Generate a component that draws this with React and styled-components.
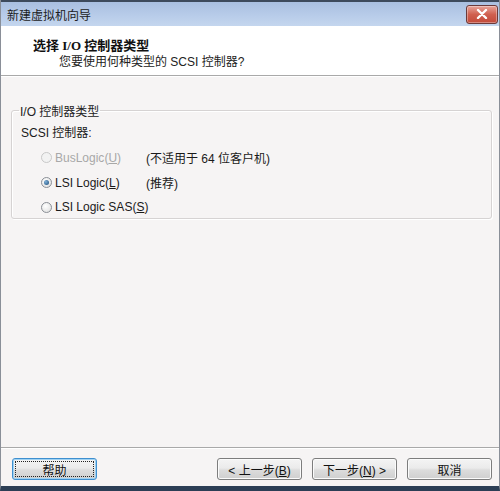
import React from "react";
import styled, { createGlobalStyle } from "styled-components";

const GlobalStyle = createGlobalStyle`
  html, body { margin: 0; padding: 0; background: #f6f4f4; }
  body {
    font-family: "Liberation Sans", "Noto Sans CJK SC", sans-serif;
    font-size: 12px;
    color: #1a1a1a;
  }
`;

const Window = styled.div`
  width: 500px;
  height: 491px;
  display: flex;
  flex-direction: column;
  box-sizing: border-box;
  border-left: 1px solid #8a8f98;
  border-right: 1px solid #8a8f98;
  border-bottom: 5px solid #2c3e55;
  background: #f6f4f4;
  overflow: hidden;
`;

const TitleBar = styled.div`
  height: 26px;
  flex: none;
  display: flex;
  align-items: center;
  justify-content: space-between;
  padding: 0 1px 0 6px;
  box-sizing: border-box;
  border-top: 2px solid #3d4a5c;
  background: linear-gradient(#a9bfe0, #b9cdea 60%, #c4d6ee);
`;

const Title = styled.span`
  font-size: 12px;
  color: #1c1c1c;
`;

const CloseButton = styled.div`
  width: 30px;
  height: 17px;
  border: 1px solid #6b3a3a;
  border-radius: 3px;
  background: linear-gradient(#e8a49a, #d0604f 50%, #c24a3a);
  display: flex;
  align-items: center;
  justify-content: center;
  box-shadow: inset 0 0 0 1px rgba(255, 255, 255, 0.35);
`;

const Header = styled.div`
  height: 50px;
  flex: none;
  background: #ffffff;
  border-bottom: 1px solid #a9a9a9;
  padding: 12px 0 0 32px;
  box-sizing: border-box;
`;

const HeaderTitle = styled.div`
  font-weight: bold;
  font-size: 13px;
  line-height: 16px;
  color: #111;
  font-family: "Liberation Serif", "Noto Sans CJK SC", serif;
`;

const HeaderSub = styled.div`
  padding-left: 26px;
  line-height: 16px;
  color: #222;
`;

const Body = styled.div`
  flex: 1;
  border-top: 1px solid #ffffff;
  padding: 25px 7px 0 10px;
`;

const GroupBox = styled.fieldset`
  margin: 0;
  padding: 6px 9px 0 9px;
  height: 117px;
  box-sizing: border-box;
  border: 1px solid #d6d3d3;
  border-radius: 3px;
  box-shadow: 1px 1px 0 #ffffff, inset 1px 1px 0 #ffffff;
`;

const Legend = styled.legend`
  padding: 0 1px;
  margin-left: -2px;
  color: #222;
`;

const GroupLabel = styled.div`
  line-height: 16px;
`;

const OptionList = styled.div`
  display: flex;
  flex-direction: column;
  gap: 9px;
  margin-top: 8px;
  padding-left: 20px;
`;

const OptionRow = styled.label`
  display: grid;
  grid-template-columns: 105px max-content;
  align-items: center;
  height: 16px;
  white-space: nowrap;
  color: ${(p) => (p.disabled ? "#a8a8a8" : "#1a1a1a")};
`;

const RadioWrap = styled.span`
  display: flex;
  align-items: center;
  gap: 3px;
`;

const Radio = styled.span`
  flex: none;
  width: 11px;
  height: 11px;
  border-radius: 50%;
  box-sizing: border-box;
  border: 1px solid ${(p) => (p.disabled ? "#c8c8c8" : "#8b8f96")};
  background: ${(p) =>
    p.disabled
      ? "#f2f2f2"
      : "radial-gradient(circle at 40% 35%, #ffffff, #dcdcdc)"};
  display: flex;
  align-items: center;
  justify-content: center;
  &::after {
    content: "";
    width: 5px;
    height: 5px;
    border-radius: 50%;
    background: radial-gradient(circle at 35% 35%, #7fb0d8, #1c4c7a);
    display: ${(p) => (p.checked ? "block" : "none")};
  }
`;

const Note = styled.span`
  color: #1a1a1a;
`;

const Spacer = styled.div`
  flex: 1;
`;

const Footer = styled.div`
  flex: none;
  height: 39px;
  box-sizing: border-box;
  border-top: 1px solid #a9a9a9;
  box-shadow: inset 0 1px 0 #ffffff;
  display: flex;
  align-items: center;
  padding: 4px 7px 0 11px;
  gap: 10px;
`;

const Button = styled.button`
  width: 85px;
  height: 22px;
  margin-left: ${(p) => (p.$push ? "auto" : "0")};
  font-family: "Liberation Sans", "Noto Sans CJK SC", sans-serif;
  font-size: 12px;
  color: #111;
  border-radius: 3px;
  border: 1px solid ${(p) => (p.$focused ? "#3f8fcf" : "#7d7d7d")};
  background: linear-gradient(#f4f4f4, #ebebeb 45%, #dcdcdc 55%, #cfcfcf);
  box-shadow: ${(p) =>
    p.$focused ? "inset 0 0 0 1px #9fd2f3" : "inset 0 0 0 1px #fbfbfb"};
  outline: ${(p) => (p.$focused ? "1px dotted #222" : "none")};
  outline-offset: -4px;
  padding: 0;
`;

const Underline = styled.span`
  text-decoration: underline;
`;

function CloseIcon() {
  return (
    <svg width="12" height="10" viewBox="0 0 12 10">
      <path
        d="M2 1 L10 9 M10 1 L2 9"
        stroke="#ffffff"
        strokeWidth="2.4"
        strokeLinecap="round"
      />
    </svg>
  );
}

const options = [
  { label: "BusLogic", key: "U", note: "(不适用于 64 位客户机)", disabled: true },
  { label: "LSI Logic", key: "L", note: "(推荐)", checked: true },
  { label: "LSI Logic SAS", key: "S" },
];

export default function App() {
  return (
    <>
      <GlobalStyle />
      <Window>
        <TitleBar>
          <Title>新建虚拟机向导</Title>
          <CloseButton>
            <CloseIcon />
          </CloseButton>
        </TitleBar>
        <Header>
          <HeaderTitle>选择 I/O 控制器类型</HeaderTitle>
          <HeaderSub>您要使用何种类型的 SCSI 控制器?</HeaderSub>
        </Header>
        <Body>
          <GroupBox>
            <Legend>I/O 控制器类型</Legend>
            <GroupLabel>SCSI 控制器:</GroupLabel>
            <OptionList>
              {options.map((o) => (
                <OptionRow key={o.key} disabled={o.disabled}>
                  <RadioWrap>
                    <Radio checked={o.checked} disabled={o.disabled} />
                    <span>
                      {o.label}(<Underline>{o.key}</Underline>)
                    </span>
                  </RadioWrap>
                  <Note>{o.note}</Note>
                </OptionRow>
              ))}
            </OptionList>
          </GroupBox>
        </Body>
        <Spacer />
        <Footer>
          <Button $focused>帮助</Button>
          <Button $push>
            &lt; 上一步(<Underline>B</Underline>)
          </Button>
          <Button>
            下一步(<Underline>N</Underline>) &gt;
          </Button>
          <Button>取消</Button>
        </Footer>
      </Window>
    </>
  );
}
